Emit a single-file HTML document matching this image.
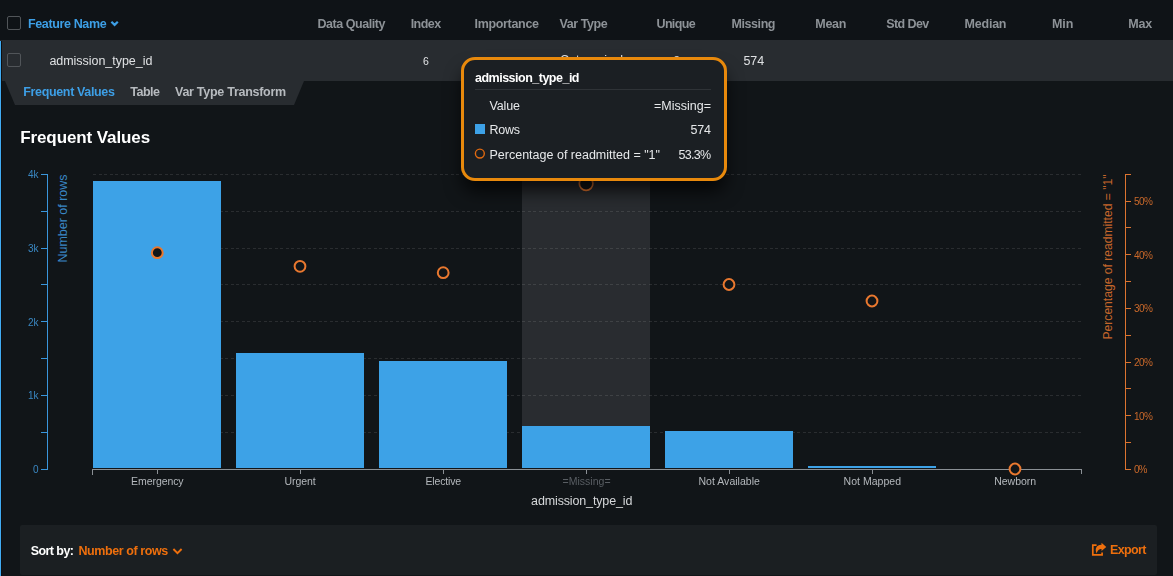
<!DOCTYPE html>
<html lang="en">
<head>
<meta charset="utf-8">
<title>Frequent Values</title>
<style>
html,body{margin:0;padding:0;background:#111518;}
body{width:1173px;height:576px;position:relative;overflow:hidden;font-family:"Liberation Sans",sans-serif;}
.abs{position:absolute;}
.tl{position:absolute;left:0;top:0;width:1173px;height:576px;will-change:transform;}
.t{position:absolute;white-space:pre;font-family:"Liberation Sans",sans-serif;}
.hdr{left:0;top:0;width:1173px;height:40px;background:#0f1317;}
.row{left:0;top:40px;width:1173px;height:41px;background:#282c30;}
.lbar{left:0;top:41px;width:1px;height:535px;background:#41acf3;}
.tabs{left:5px;top:81px;width:299px;height:24px;background:#282c30;clip-path:polygon(0 0,100% 0,289px 100%,10px 100%);}
.cb{width:12px;height:12px;border:1px solid #515559;border-radius:2px;left:7px;}
.chart{position:absolute;left:0;top:0;}
.sort{left:20px;top:525px;width:1137px;height:50px;background:#1b1f22;border-radius:2px;}
.tip{left:461px;top:57px;width:260px;height:118px;border:3px solid #e8890c;border-radius:14px;background:#1b1f23;box-shadow:0 12px 18px -2px rgba(0,0,0,.75);}
.tipline{left:475px;top:89px;width:236px;height:1px;background:#2f3337;}
.sq{left:475px;top:124px;width:10px;height:10px;background:#3da1e6;}
</style>
</head>
<body>
<div class="abs hdr"></div>
<div class="abs row"></div>
<div class="abs tabs"></div>
<div class="abs lbar"></div>
<div class="abs" style="left:1px;top:41px;width:1px;height:535px;background:#0d0f11"></div>
<div class="abs cb" style="top:16px"></div>
<div class="abs cb" style="top:53px"></div>
<svg class="abs" style="left:110px;top:20px" width="10" height="8" viewBox="0 0 10 8"><path d="M1.4 1.7L4.6 4.9L7.8 1.7" fill="none" stroke="#3d9fe6" stroke-width="2.2"/></svg>
<svg class="chart" width="1173" height="576" viewBox="0 0 1173 576" shape-rendering="crispEdges">
<rect x="522" y="174" width="128" height="294" fill="#292c30"/>
<line x1="93" x2="1081" y1="432.5" y2="432.5" stroke="rgba(255,255,255,0.105)" stroke-width="1" stroke-dasharray="3 2.5"/>
<line x1="93" x2="1081" y1="395.5" y2="395.5" stroke="rgba(255,255,255,0.105)" stroke-width="1" stroke-dasharray="3 2.5"/>
<line x1="93" x2="1081" y1="358.5" y2="358.5" stroke="rgba(255,255,255,0.105)" stroke-width="1" stroke-dasharray="3 2.5"/>
<line x1="93" x2="1081" y1="321.5" y2="321.5" stroke="rgba(255,255,255,0.105)" stroke-width="1" stroke-dasharray="3 2.5"/>
<line x1="93" x2="1081" y1="284.5" y2="284.5" stroke="rgba(255,255,255,0.105)" stroke-width="1" stroke-dasharray="3 2.5"/>
<line x1="93" x2="1081" y1="248.5" y2="248.5" stroke="rgba(255,255,255,0.105)" stroke-width="1" stroke-dasharray="3 2.5"/>
<line x1="93" x2="1081" y1="211.5" y2="211.5" stroke="rgba(255,255,255,0.105)" stroke-width="1" stroke-dasharray="3 2.5"/>
<line x1="93" x2="1081" y1="174.5" y2="174.5" stroke="rgba(255,255,255,0.105)" stroke-width="1" stroke-dasharray="3 2.5"/>
<rect x="93" y="181" width="128" height="287" fill="#3da2e7"/>
<rect x="236" y="353" width="128" height="115" fill="#3da2e7"/>
<rect x="379" y="361" width="128" height="107" fill="#3da2e7"/>
<rect x="522" y="426" width="128" height="42" fill="#3da2e7"/>
<rect x="665" y="431" width="128" height="37" fill="#3da2e7"/>
<rect x="808" y="466" width="128" height="2" fill="#3da2e7"/>
<path d="M92.5 475V469.5H1081.5V474" fill="none" stroke="#8b9095" stroke-width="1"/>
<line x1="157.5" x2="157.5" y1="469" y2="474" stroke="#8b9095" stroke-width="1"/>
<line x1="300.5" x2="300.5" y1="469" y2="474" stroke="#8b9095" stroke-width="1"/>
<line x1="443.5" x2="443.5" y1="469" y2="474" stroke="#8b9095" stroke-width="1"/>
<line x1="586.5" x2="586.5" y1="469" y2="474" stroke="#8b9095" stroke-width="1"/>
<line x1="729.5" x2="729.5" y1="469" y2="474" stroke="#8b9095" stroke-width="1"/>
<line x1="872.5" x2="872.5" y1="469" y2="474" stroke="#8b9095" stroke-width="1"/>
<line x1="1015.5" x2="1015.5" y1="469" y2="474" stroke="#8b9095" stroke-width="1"/>
<path d="M41 174.5H47.5V469.5H41" fill="none" stroke="#3a96dc" stroke-width="1"/>
<line x1="41" x2="47" y1="432.5" y2="432.5" stroke="#3a96dc" stroke-width="1"/>
<line x1="41" x2="47" y1="395.5" y2="395.5" stroke="#3a96dc" stroke-width="1"/>
<line x1="41" x2="47" y1="358.5" y2="358.5" stroke="#3a96dc" stroke-width="1"/>
<line x1="41" x2="47" y1="321.5" y2="321.5" stroke="#3a96dc" stroke-width="1"/>
<line x1="41" x2="47" y1="284.5" y2="284.5" stroke="#3a96dc" stroke-width="1"/>
<line x1="41" x2="47" y1="248.5" y2="248.5" stroke="#3a96dc" stroke-width="1"/>
<line x1="41" x2="47" y1="211.5" y2="211.5" stroke="#3a96dc" stroke-width="1"/>
<path d="M1131 174.5H1125.5V469.5H1131" fill="none" stroke="#dd7430" stroke-width="1"/>
<line x1="1125" x2="1131" y1="442.5" y2="442.5" stroke="#dd7430" stroke-width="1"/>
<line x1="1125" x2="1131" y1="415.5" y2="415.5" stroke="#dd7430" stroke-width="1"/>
<line x1="1125" x2="1131" y1="388.5" y2="388.5" stroke="#dd7430" stroke-width="1"/>
<line x1="1125" x2="1131" y1="362.5" y2="362.5" stroke="#dd7430" stroke-width="1"/>
<line x1="1125" x2="1131" y1="335.5" y2="335.5" stroke="#dd7430" stroke-width="1"/>
<line x1="1125" x2="1131" y1="308.5" y2="308.5" stroke="#dd7430" stroke-width="1"/>
<line x1="1125" x2="1131" y1="281.5" y2="281.5" stroke="#dd7430" stroke-width="1"/>
<line x1="1125" x2="1131" y1="254.5" y2="254.5" stroke="#dd7430" stroke-width="1"/>
<line x1="1125" x2="1131" y1="227.5" y2="227.5" stroke="#dd7430" stroke-width="1"/>
<line x1="1125" x2="1131" y1="201.5" y2="201.5" stroke="#dd7430" stroke-width="1"/>
<g shape-rendering="geometricPrecision">
<circle cx="157.3" cy="252.7" r="5.4" fill="#111518" stroke="#e9782f" stroke-width="2"/>
<circle cx="300" cy="266.3" r="5.4" fill="#111518" stroke="#e9782f" stroke-width="2"/>
<circle cx="443.2" cy="272.7" r="5.4" fill="#111518" stroke="#e9782f" stroke-width="2"/>
<circle cx="586.1" cy="183.6" r="6.8" fill="#111518" stroke="#e9782f" stroke-width="1.7"/>
<circle cx="729" cy="284.5" r="5.4" fill="#111518" stroke="#e9782f" stroke-width="2"/>
<circle cx="872" cy="301" r="5.4" fill="#111518" stroke="#e9782f" stroke-width="2"/>
<circle cx="1015" cy="469" r="5.4" fill="#111518" stroke="#e9782f" stroke-width="2"/>
<text transform="translate(67,174.5) rotate(-90)" text-anchor="end" font-size="12" fill="#3987c4" textLength="88" lengthAdjust="spacingAndGlyphs">Number of rows</text>
<text transform="translate(1111.5,174.5) rotate(-90)" text-anchor="end" font-size="12" fill="#c4662b" textLength="165" lengthAdjust="spacingAndGlyphs">Percentage of readmitted = "1"</text>
</g>
</svg>
<div class="abs sort"></div>
<svg class="abs" style="left:171.5px;top:546.7px" width="11" height="9" viewBox="0 0 11 9"><path d="M1.4 2L5.5 6.1L9.6 2" fill="none" stroke="#ee6f0d" stroke-width="1.9"/></svg>
<svg class="abs" style="left:1091px;top:542px" width="16" height="16" viewBox="0 0 16 16"><path d="M5.6 3.15H1.8V12.95H11.1V10.4" fill="none" stroke="#ee6f0d" stroke-width="1.7"/><path d="M10.5 0.8L15.3 4.9L10.5 8.9V6.9C8.2 6.9 6.8 7.8 5.7 11.4C3.4 7 5.4 2.9 10.5 2.8Z" fill="#ee6f0d"/></svg>
<div class="tl">
<span class="t" style="left:28.0px;top:18.42px;font-size:12.5px;line-height:12.5px;font-weight:700;color:#3d9fe6;letter-spacing:-0.372px">Feature Name</span>
<span class="t" style="left:317.4px;top:18.42px;font-size:12.5px;line-height:12.5px;font-weight:700;color:#8d9297;letter-spacing:-0.440px">Data Quality</span>
<span class="t" style="left:410.7px;top:18.42px;font-size:12.5px;line-height:12.5px;font-weight:700;color:#8d9297;letter-spacing:-0.539px">Index</span>
<span class="t" style="left:474.5px;top:18.42px;font-size:12.5px;line-height:12.5px;font-weight:700;color:#8d9297;letter-spacing:-0.321px">Importance</span>
<span class="t" style="left:559.4px;top:18.42px;font-size:12.5px;line-height:12.5px;font-weight:700;color:#8d9297;letter-spacing:-0.398px">Var Type</span>
<span class="t" style="left:656.5px;top:18.42px;font-size:12.5px;line-height:12.5px;font-weight:700;color:#8d9297;letter-spacing:-0.652px">Unique</span>
<span class="t" style="left:731.5px;top:18.42px;font-size:12.5px;line-height:12.5px;font-weight:700;color:#8d9297;letter-spacing:-0.424px">Missing</span>
<span class="t" style="left:815.3px;top:18.42px;font-size:12.5px;line-height:12.5px;font-weight:700;color:#8d9297;letter-spacing:-0.284px">Mean</span>
<span class="t" style="left:886.3px;top:18.42px;font-size:12.5px;line-height:12.5px;font-weight:700;color:#8d9297;letter-spacing:-0.591px">Std Dev</span>
<span class="t" style="left:964.6px;top:18.42px;font-size:12.5px;line-height:12.5px;font-weight:700;color:#8d9297;letter-spacing:-0.233px">Median</span>
<span class="t" style="left:1052.0px;top:18.42px;font-size:12.5px;line-height:12.5px;font-weight:700;color:#8d9297;letter-spacing:-0.116px">Min</span>
<span class="t" style="left:1128.2px;top:18.42px;font-size:12.5px;line-height:12.5px;font-weight:700;color:#8d9297;letter-spacing:-0.114px">Max</span>
<span class="t" style="left:49.4px;top:54.92px;font-size:12.5px;line-height:12.5px;font-weight:400;color:#dfe1e3;letter-spacing:-0.034px">admission_type_id</span>
<span class="t" style="left:423.0px;top:56.11px;font-size:10.5px;line-height:10.5px;font-weight:400;color:#dfe1e3;letter-spacing:0.000px">6</span>
<span class="t" style="left:560.0px;top:54.42px;font-size:12.5px;line-height:12.5px;font-weight:400;color:#dfe1e3;letter-spacing:-0.023px">Categorical</span>
<span class="t" style="left:673.2px;top:55.02px;font-size:12.5px;line-height:12.5px;font-weight:400;color:#dfe1e3;letter-spacing:0.000px">8</span>
<span class="t" style="left:743.5px;top:54.92px;font-size:12.5px;line-height:12.5px;font-weight:400;color:#dfe1e3;letter-spacing:-0.080px">574</span>
<span class="t" style="left:23.3px;top:86.42px;font-size:12.5px;line-height:12.5px;font-weight:700;color:#3d9fe6;letter-spacing:-0.354px">Frequent Values</span>
<span class="t" style="left:130.2px;top:86.42px;font-size:12.5px;line-height:12.5px;font-weight:700;color:#b7bbbf;letter-spacing:-0.459px">Table</span>
<span class="t" style="left:175.0px;top:86.42px;font-size:12.5px;line-height:12.5px;font-weight:700;color:#b7bbbf;letter-spacing:-0.270px">Var Type Transform</span>
<span class="t" style="left:20.2px;top:129.11px;font-size:17px;line-height:17px;font-weight:700;color:#ffffff;letter-spacing:-0.095px">Frequent Values</span>
<span class="t" style="left:30.7px;top:545.42px;font-size:12.5px;line-height:12.5px;font-weight:700;color:#ffffff;letter-spacing:-0.562px">Sort by:</span>
<span class="t" style="left:78.4px;top:545.42px;font-size:12.5px;line-height:12.5px;font-weight:700;color:#ee6f0d;letter-spacing:-0.412px">Number of rows</span>
<span class="t" style="left:1110.0px;top:544.42px;font-size:12.5px;line-height:12.5px;font-weight:700;color:#ee6f0d;letter-spacing:-0.639px">Export</span>
<span class="t" style="left:531.1px;top:494.62px;font-size:12.5px;line-height:12.5px;font-weight:400;color:#d6d8da;letter-spacing:-0.140px">admission_type_id</span>
<span class="t" style="left:131.1px;top:476.11px;font-size:10.5px;line-height:10.5px;font-weight:400;color:#b4b8bc;letter-spacing:-0.076px">Emergency</span>
<span class="t" style="left:284.6px;top:476.11px;font-size:10.5px;line-height:10.5px;font-weight:400;color:#b4b8bc;letter-spacing:-0.103px">Urgent</span>
<span class="t" style="left:425.4px;top:476.11px;font-size:10.5px;line-height:10.5px;font-weight:400;color:#b4b8bc;letter-spacing:-0.138px">Elective</span>
<span class="t" style="left:562.5px;top:476.11px;font-size:10.5px;line-height:10.5px;font-weight:400;color:#595e63;letter-spacing:0.030px">=Missing=</span>
<span class="t" style="left:698.5px;top:476.11px;font-size:10.5px;line-height:10.5px;font-weight:400;color:#b4b8bc;letter-spacing:0.024px">Not Available</span>
<span class="t" style="left:843.5px;top:476.11px;font-size:10.5px;line-height:10.5px;font-weight:400;color:#b4b8bc;letter-spacing:0.044px">Not Mapped</span>
<span class="t" style="left:994.2px;top:476.11px;font-size:10.5px;line-height:10.5px;font-weight:400;color:#b4b8bc;letter-spacing:-0.022px">Newborn</span>
<span class="t" style="left:33.0px;top:465.24px;font-size:10px;line-height:10px;font-weight:400;color:#3a87c2;letter-spacing:0.000px">0</span>
<span class="t" style="left:27.9px;top:391.49px;font-size:10px;line-height:10px;font-weight:400;color:#3a87c2;letter-spacing:0.137px">1k</span>
<span class="t" style="left:27.9px;top:317.74px;font-size:10px;line-height:10px;font-weight:400;color:#3a87c2;letter-spacing:0.137px">2k</span>
<span class="t" style="left:27.9px;top:243.98px;font-size:10px;line-height:10px;font-weight:400;color:#3a87c2;letter-spacing:0.137px">3k</span>
<span class="t" style="left:27.9px;top:170.23px;font-size:10px;line-height:10px;font-weight:400;color:#3a87c2;letter-spacing:0.137px">4k</span>
<span class="t" style="left:1134.0px;top:465.24px;font-size:10px;line-height:10px;font-weight:400;color:#c9682a;letter-spacing:-0.953px">0%</span>
<span class="t" style="left:1134.0px;top:411.60px;font-size:10px;line-height:10px;font-weight:400;color:#c9682a;letter-spacing:-0.508px">10%</span>
<span class="t" style="left:1134.0px;top:357.96px;font-size:10px;line-height:10px;font-weight:400;color:#c9682a;letter-spacing:-0.508px">20%</span>
<span class="t" style="left:1134.0px;top:304.33px;font-size:10px;line-height:10px;font-weight:400;color:#c9682a;letter-spacing:-0.508px">30%</span>
<span class="t" style="left:1134.0px;top:250.69px;font-size:10px;line-height:10px;font-weight:400;color:#c9682a;letter-spacing:-0.508px">40%</span>
<span class="t" style="left:1134.0px;top:197.05px;font-size:10px;line-height:10px;font-weight:400;color:#c9682a;letter-spacing:-0.508px">50%</span>
</div>
<div class="abs tip"></div>
<div class="abs tipline"></div>
<div class="abs sq"></div>
<svg class="abs" style="left:473px;top:147px" width="14" height="14" viewBox="0 0 14 14"><circle cx="6.85" cy="6.6" r="4.45" fill="none" stroke="#e26a10" stroke-width="1.4"/></svg>
<div class="tl">
<span class="t" style="left:475.0px;top:72.42px;font-size:12.5px;line-height:12.5px;font-weight:700;color:#ffffff;letter-spacing:-0.503px">admission_type_id</span>
<span class="t" style="left:489.5px;top:100.42px;font-size:12.5px;line-height:12.5px;font-weight:400;color:#e6e8ea;letter-spacing:-0.137px">Value</span>
<span class="t" style="left:489.5px;top:124.42px;font-size:12.5px;line-height:12.5px;font-weight:400;color:#e6e8ea;letter-spacing:-0.255px">Rows</span>
<span class="t" style="left:489.5px;top:149.42px;font-size:12.5px;line-height:12.5px;font-weight:400;color:#e6e8ea;letter-spacing:0.002px">Percentage of readmitted = &quot;1&quot;</span>
<span class="t" style="left:654.0px;top:100.42px;font-size:12.5px;line-height:12.5px;font-weight:400;color:#e6e8ea;letter-spacing:0.002px">=Missing=</span>
<span class="t" style="left:690.5px;top:124.42px;font-size:12.5px;line-height:12.5px;font-weight:400;color:#e6e8ea;letter-spacing:-0.180px">574</span>
<span class="t" style="left:678.5px;top:149.42px;font-size:12.5px;line-height:12.5px;font-weight:400;color:#e6e8ea;letter-spacing:-0.738px">53.3%</span>
</div>
</body>
</html>
